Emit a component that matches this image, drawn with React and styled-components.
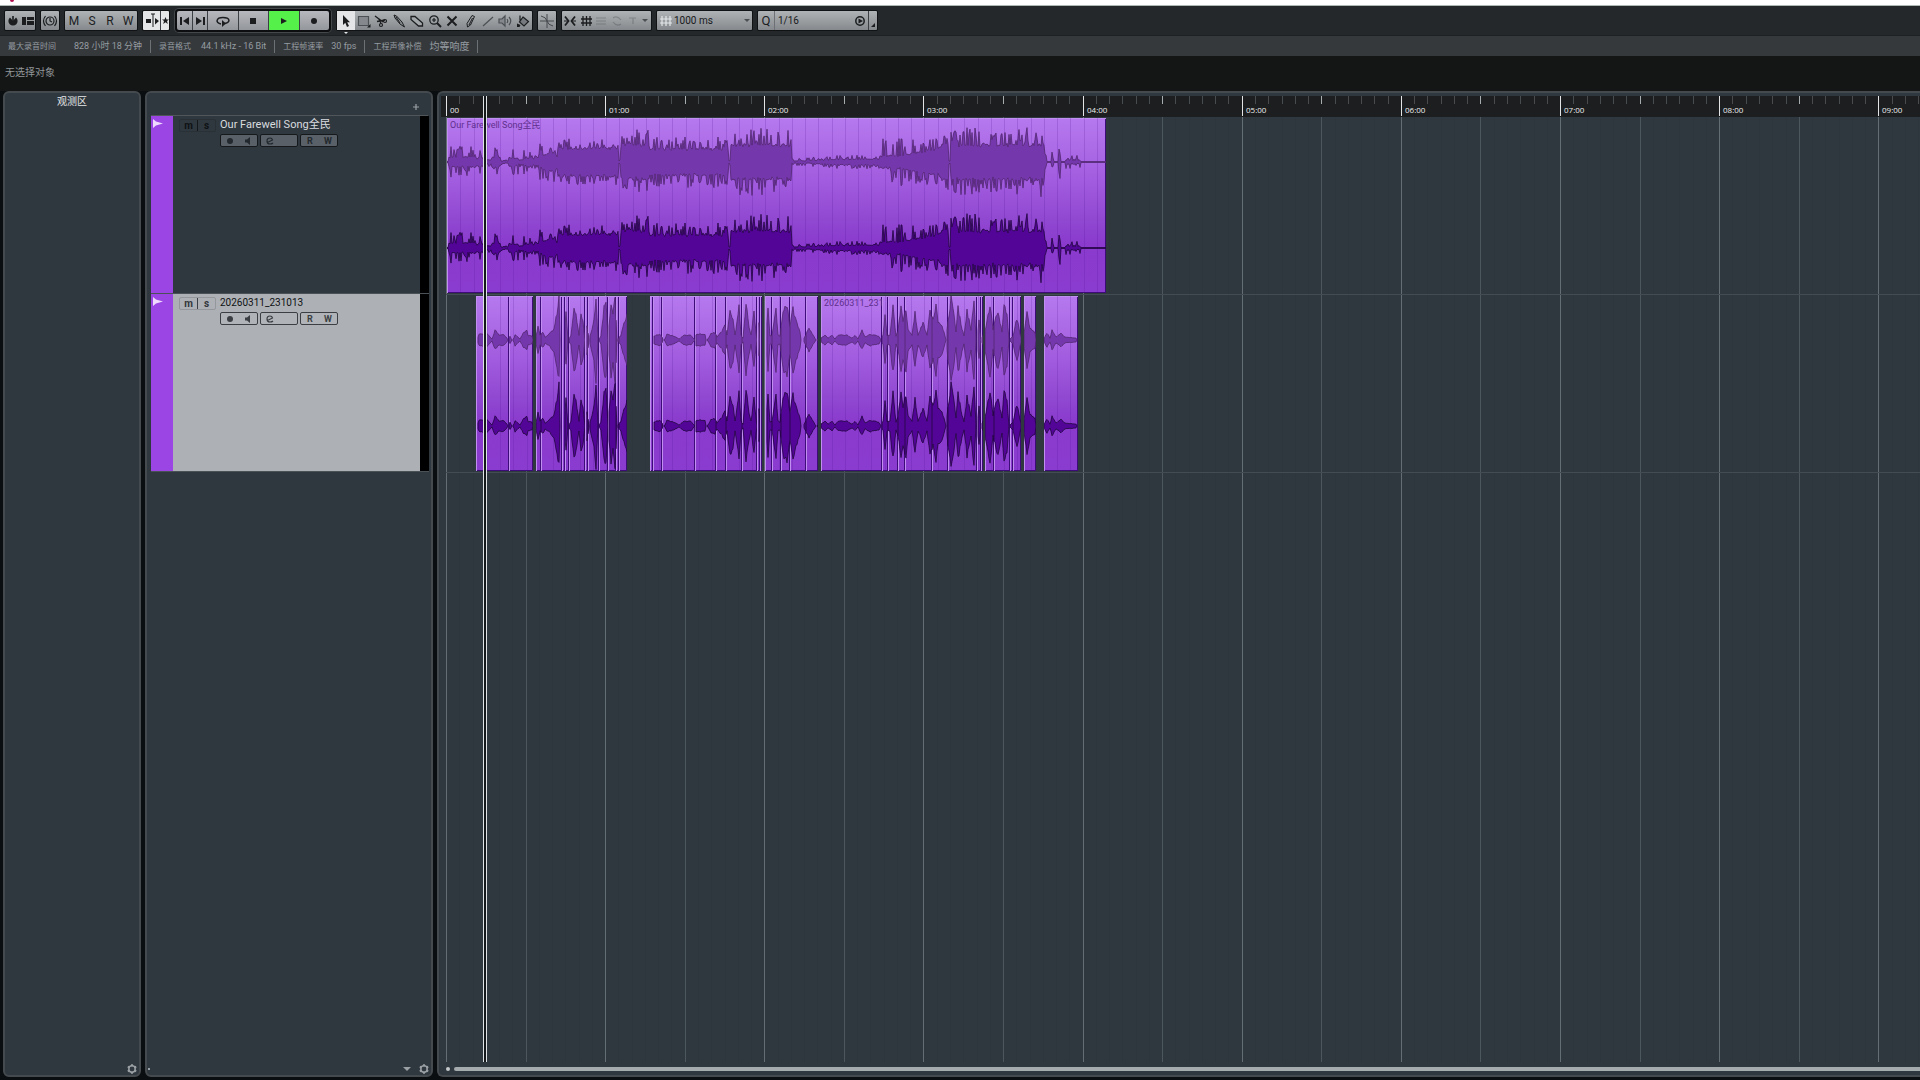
import React from "react";
import styled, { createGlobalStyle, css } from "styled-components";

const MINUTE = 159.15;
const MINUTES = 10;
const WAVE_CENTERS = [44, 130];

const at = (minutes) => Math.round(minutes * MINUTE);

// seeded noise so that every render draws the same peaks
const noise = (n) => {
  const v = Math.sin(n * 127.1 + 11.7) * 43758.5453;
  return v - Math.floor(v);
};

// [from, to, body at start, body at end, peak]
const SONG = [
  [2, 29, 4, 5, 16],
  [29, 31, 3, 3, 5],
  [31, 37, 4, 4, 14],
  [37, 45, 2, 2, 5],
  [45, 54, 5, 4, 15],
  [54, 62, 1, 1, 3],
  [62, 72, 4, 3, 14],
  [72, 77, 2, 2, 5],
  [77, 85, 3, 4, 12],
  [85, 92, 3, 3, 7],
  [92, 109, 5, 11, 21],
  [109, 111, 5, 5, 9],
  [111, 172, 14, 14, 24],
  [172, 174, 1, 1, 3],
  [174, 203, 17, 17, 33],
  [203, 282, 13, 13, 26],
  [282, 284, 1, 1, 5],
  [284, 345, 17, 17, 35],
  [345, 360, 1, 1, 4],
  [360, 380, 1, 2, 5],
  [380, 433, 2, 3, 7],
  [433, 458, 5, 6, 24],
  [458, 493, 7, 13, 24],
  [493, 502, 16, 18, 31],
  [502, 504, 1, 1, 3],
  [504, 598, 17, 17, 35],
  [598, 600, 8, 1, 8],
  [605, 607, 5, 3, 11],
  [612, 614, 12, 6, 20],
  [619, 634, 2, 1, 7],
];

// [x, amplitude], a zero closes a phrase
const VOCAL = [
  [30, 0], [32, 6], [40, 7], [45, 1], [48, 10], [52, 5], [56, 6], [60, 2], [61, 0],
  [63, 4], [65, 0], [67, 2], [68, 6], [73, 1], [76, 7], [80, 10], [81, 5], [85, 4], [86, 0],
  [89, 3], [91, 14], [93, 5], [96, 8], [98, 3], [103, 7], [107, 12], [110, 28], [112, 42], [113, 0],
  [117, 0], [119, 28], [121, 0], [124, 5], [127, 35], [130, 20], [132, 5], [134, 29], [136, 20], [138, 0],
  [139, 0], [140, 16], [142, 0], [144, 8], [147, 20], [149, 44], [151, 0], [154, 4], [157, 34], [159, 42], [161, 0],
  [162, 15], [164, 38], [166, 26], [168, 44], [170, 0], [174, 5], [176, 14], [180, 25], [181, 0],
  [206, 0], [207, 4], [213, 6], [215, 3], [216, 0], [218, 1], [220, 6], [227, 4], [232, 1], [237, 5], [244, 5], [247, 1], [248, 0],
  [249, 6], [258, 6], [259, 0], [261, 1], [264, 7], [268, 8], [270, 3], [275, 10], [278, 15], [280, 5], [283, 32],
  [286, 22], [288, 5], [292, 34], [294, 5], [296, 2], [299, 38], [302, 15], [304, 5], [307, 29], [309, 8], [310, 0],
  [311, 0], [312, 17], [313, 0], [319, 0], [321, 34], [323, 4], [325, 5], [329, 33], [331, 5], [333, 4], [336, 32], [340, 38],
  [343, 15], [346, 32], [350, 18], [353, 8], [354, 0],
  [356, 0], [362, 12], [366, 5], [369, 0],
  [374, 2], [378, 5], [381, 2], [385, 5], [388, 1], [391, 5], [400, 5], [405, 2], [408, 5], [411, 1], [415, 10], [418, 3],
  [423, 6], [432, 4], [434, 0], [436, 5], [438, 25], [440, 5], [443, 5], [446, 35], [449, 4],
  [451, 10], [454, 34], [456, 20], [459, 32], [461, 12], [465, 5], [468, 28], [471, 5], [476, 18], [480, 5], [483, 30],
  [486, 20], [489, 36], [491, 18], [495, 15], [498, 4], [499, 0],
  [501, 20], [504, 43], [507, 25], [509, 8], [511, 34], [515, 12], [517, 4], [520, 31], [524, 10], [527, 44], [529, 0],
  [530, 0], [532, 20], [534, 0], [538, 10], [543, 37], [546, 10], [549, 24], [551, 30], [555, 8], [557, 37], [560, 28], [562, 0],
  [566, 4], [570, 23], [573, 6], [575, 0], [577, 6], [580, 28], [583, 13], [588, 8], [589, 0],
  [596, 1], [600, 7], [603, 2], [605, 10], [609, 3], [614, 7], [618, 3], [629, 2], [630, 0],
];

function songLevel(x, seed) {
  const part = SONG.find(([from, to]) => x >= from && x < to);
  if (!part) return 0.5;
  const [from, to, start, end, peak] = part;
  const body = start + ((end - start) * (x - from)) / (to - from);
  const n = noise(x + seed / 4);
  const spike = n > 0.62 ? 0.2 + 0.8 * noise(x * 3.3) : n * 0.15;
  return body * (0.85 + 0.2 * noise(x + seed + 9)) + (peak - body) * spike;
}

function vocalLevel(x, seed) {
  for (let i = 1; i < VOCAL.length; i++) {
    const [x0, a0] = VOCAL[i - 1];
    const [x1, a1] = VOCAL[i];
    if (x >= x0 && x <= x1) {
      const level = a0 + ((a1 - a0) * (x - x0)) / (x1 - x0);
      return level * (0.85 + 0.2 * noise(x + seed));
    }
  }
  return 0;
}

// one closed outline for each stretch that is not silent
function wavePath(level, start, end, center) {
  const parts = [];
  let top = [];
  let bottom = [];
  const close = () => {
    if (top.length > 1) parts.push(`M${top.join("L")}L${bottom.join("L")}Z`);
    top = [];
    bottom = [];
  };
  for (let x = start; x <= end; x += 1) {
    const up = level(x, 0);
    const down = level(x, 400);
    top.push(`${x - start} ${(center - up).toFixed(1)}`);
    bottom.unshift(`${x - start} ${(center + down).toFixed(1)}`);
    if (up === 0) close();
  }
  close();
  return parts.join("");
}

const songClips = [{ start: 0, end: 659, name: "Our Farewell Song全民" }];

const vocalClips = [
  [29, 62], [62, 86], [89, 94], [94, 115], [115, 118], [118, 122], [122, 138], [138, 141],
  [141, 152], [152, 161], [161, 169], [169, 172], [172, 180], [203, 206], [206, 215],
  [215, 248], [248, 269], [269, 279], [279, 295], [295, 310], [310, 313], [313, 315],
  [318, 325], [325, 334], [334, 343], [343, 359], [359, 371], [374, 435], [435, 441],
  [441, 451], [451, 458], [458, 485], [485, 501], [501, 530], [530, 534], [534, 536],
  [538, 547], [547, 563], [563, 566], [566, 574], [577, 589], [597, 631],
].map(([start, end]) => ({
  start,
  end,
  name: start === 374 ? "20260311_231" : "",
}));

const tracks = [
  { name: "Our Farewell Song全民", selected: false, level: songLevel, clips: songClips },
  { name: "20260311_231013", selected: true, level: vocalLevel, clips: vocalClips },
];

function Icon({ w = 16, h = 16, children, ...rest }) {
  return (
    <svg
      width={w}
      height={h}
      viewBox={`0 0 ${w} ${h}`}
      fill="none"
      stroke="currentColor"
      strokeWidth="1.2"
      aria-hidden="true"
      {...rest}
    >
      {children}
    </svg>
  );
}

const tools = [
  {
    name: "选择对象",
    art: <path d="M5 2v10l2.3-2.2L9 14l2-1-1.8-3.8H12z" fill="currentColor" stroke="none" />,
  },
  {
    name: "选择范围",
    art: (
      <>
        <path d="M2.5 3.5h10v9h-10z" stroke="#4b5054" fill="#85898d" />
        <path d="M14.500 11v3.500h-3.500z" fill="currentColor" stroke="none" />
      </>
    ),
  },
  {
    name: "分割",
    art: (
      <>
        <path d="M2 3l8 6M4 8.500l8-1.500" strokeWidth="1.300" />
        <circle cx="12" cy="8" r="1.500" />
        <circle cx="8" cy="12" r="1.500" />
        <path d="M6 6l2 4.500" />
      </>
    ),
  },
  {
    name: "胶合",
    art: <path d="M3 2l2.500 1 5.500 6 2.500 5-4.500-3-5-6zM5 4l4 6" fill="#8a8e91" strokeWidth="1" />,
  },
  {
    name: "擦除",
    art: <path d="M2 3.500h4l7.500 6.500v3h-4L2 6.500z" fill="#a3a7aa" strokeWidth="1.300" />,
  },
  {
    name: "缩放",
    art: (
      <>
        <circle cx="7" cy="7" r="4.200" strokeWidth="1.300" />
        <path d="M5 7h4M7 5v4" />
        <path d="M10 10l4 4" strokeWidth="2" />
      </>
    ),
  },
  { name: "静音", art: <path d="M3.500 3.500l9 9M12.500 3.500l-9 9" strokeWidth="2" /> },
  { name: "绘制", art: <path d="M10 2.500l2.500 1-4 8.500L5.500 14l-.5-3.500zM10.500 5L7 12" strokeWidth="1" /> },
  { name: "直线", art: <path d="M3 13L13 4" stroke="#4b5054" /> },
  {
    name: "播放",
    art: (
      <>
        <path d="M2 6h3l3-3v10l-3-3H2z" stroke="#4b5054" fill="#85898d" />
        <path d="M10 6q1.500 2 0 4M12 4q3.500 4 0 8" stroke="#4b5054" />
      </>
    ),
  },
  {
    name: "颜色",
    art: (
      <>
        <path d="M8 4l5.500 4.500L9 13 4.500 9zM5 2.500v5" fill="#777b7f" strokeWidth="1.200" />
        <path d="M2 10.500l3.500 1.500-1 2H2z" fill="currentColor" stroke="none" />
      </>
    ),
  },
];

const GearIcon = () => (
  <Icon w={12} h={12} strokeWidth="1.500">
    <path d="M6 1.200v2M6 8.800v2M1.800 3.600l1.800 1M8.400 7.400l1.800 1M1.800 8.400l1.800-1M8.400 4.600l1.800-1" strokeWidth="2" />
    <circle cx="6" cy="6" r="3.200" />
  </Icon>
);

function Toolbar() {
  return (
    <ToolbarBar>
      <Group $width={30}>
        <ToolButton aria-label="激活工程">
          <Icon w={12} h={12}>
            <path d="M3 2.500a4.600 4.600 0 1 0 6 0L6 6z" fill="currentColor" stroke="none" />
            <path d="M6 1v5" strokeWidth="1.600" />
          </Icon>
        </ToolButton>
        <ToolButton aria-label="设置窗口布局">
          <Icon w={12} h={10} fill="currentColor" stroke="none">
            <path d="M0 1h4v8H0zM5 1h7v3H5zM5 5h7v4H5z" />
          </Icon>
        </ToolButton>
      </Group>
      <Group $width={18}>
        <ToolButton aria-label="约束延迟补偿">
          <Icon>
            <circle cx="8" cy="8" r="4" />
            <path d="M8 5v3l2 1" />
            <path d="M3.500 3q-4 5 0 10M12.500 3q4 5 0 10" />
          </Icon>
        </ToolButton>
      </Group>
      <Group $width={72}>
        {["M", "S", "R", "W"].map((letter) => (
          <ToolButton key={letter}>{letter}</ToolButton>
        ))}
      </Group>
      <Group $width={26} $bright>
        <ToolButton aria-label="自动滚动">
          <Icon>
            <path d="M7 1h4M9 1v13" strokeWidth="1" />
            <path d="M2 6h5v4H2zM11 5l4 3-4 3.500z" fill="currentColor" stroke="none" />
          </Icon>
        </ToolButton>
        <ToolButton $divided $width={9} aria-label="停止自动滚动">
          <Icon w={7} h={7} fill="currentColor" stroke="none">
            <path d="M3.500 0l1 2.400H7L5 4l.8 3-2.300-1.800L1.200 7 2 4 0 2.400h2.500z" />
          </Icon>
        </ToolButton>
      </Group>
      <Transport>
        <ToolButton $width={15} aria-label="前往上一标记">
          <Icon w={12} h={12} fill="currentColor">
            <path d="M2 2v8" strokeWidth="2" />
            <path d="M10 2v8L4 6z" stroke="none" />
          </Icon>
        </ToolButton>
        <ToolButton $width={15} $divided aria-label="前往下一标记">
          <Icon w={12} h={12} fill="currentColor">
            <path d="M10 2v8" strokeWidth="2" />
            <path d="M2 2v8l6-4z" stroke="none" />
          </Icon>
        </ToolButton>
        <ToolButton $divided aria-label="循环">
          <Icon>
            <path d="M6 11C0 10 1 4.500 8 4.500s8 4.500 2 6" strokeWidth="1.500" />
            <path d="M7 7v7l4-3.500z" fill="currentColor" stroke="none" />
          </Icon>
        </ToolButton>
        <ToolButton $divided aria-label="停止">
          <Icon w={8} h={8} stroke="none" fill="currentColor">
            <path d="M1 1h6v6H1z" />
          </Icon>
        </ToolButton>
        <ToolButton $divided $playing aria-label="开始">
          <Icon w={8} h={8} stroke="none" fill="currentColor">
            <path d="M1 1l6 3-6 3z" />
          </Icon>
        </ToolButton>
        <ToolButton $divided aria-label="录音">
          <Icon w={8} h={8} stroke="none" fill="currentColor">
            <circle cx="4" cy="4" r="3" />
          </Icon>
        </ToolButton>
      </Transport>
      <Group $width={195}>
        {tools.map((tool, i) => (
          <ToolButton key={tool.name} $active={i === 0} aria-label={tool.name}>
            <Icon>{tool.art}</Icon>
            {i === 0 && <ToolMark />}
          </ToolButton>
        ))}
      </Group>
      <Group $width={18}>
        <ToolButton aria-label="吸附到过零点">
          <Icon>
            <path d="M1 8h14M8 1v14M2 3q5 1 6 5t6 5" stroke="#45494d" strokeWidth="1" />
          </Icon>
        </ToolButton>
      </Group>
      <Group $width={89}>
        <ToolButton aria-label="吸附">
          <Icon>
            <path d="M3 3.500L6.500 8 3 12.500M13 3.500L9.500 8l3.500 4.500" strokeWidth="1.800" />
            <path d="M2 8h4M10 8h4" />
          </Icon>
        </ToolButton>
        <ToolButton aria-label="吸附类型">
          <Icon>
            <path d="M3 6h11M3 10h11M5 3v10M8.500 3v10M12 3v10" strokeWidth="1.300" />
          </Icon>
        </ToolButton>
        <ToolButton disabled aria-label="网格">
          <Icon w={12}>
            <path d="M1 5h10M1 8h10M1 11h10" />
          </Icon>
        </ToolButton>
        <ToolButton disabled aria-label="事件">
          <Icon w={12}>
            <path d="M2 5q4-3 8 2M10 11q-4 3-8-2" />
          </Icon>
        </ToolButton>
        <ToolButton disabled aria-label="光标">
          <Icon w={12}>
            <path d="M2 5h7M6 5v6" />
          </Icon>
        </ToolButton>
        <ToolButton $width={10} aria-label="更多吸附类型">
          <Caret />
        </ToolButton>
      </Group>
      <Group $width={95}>
        <GridMark w={12} h={12} stroke="#e4e6e8">
          <path d="M0 4h12M0 8h12M2 1v10M6 1v10M10 1v10" />
        </GridMark>
        <Choice aria-label="网格类型" defaultValue="1000 ms">
          <option>1000 ms</option>
        </Choice>
        <Caret />
      </Group>
      <Group $width={119}>
        <QuantizeButton aria-label="应用量化">Q</QuantizeButton>
        <Choice aria-label="量化预置" defaultValue="1/16">
          <option>1/16</option>
        </Choice>
        <ToolButton $width={17} aria-label="打开量化面板">
          <Icon w={12} h={12}>
            <circle cx="6" cy="6" r="4.200" strokeWidth="1.500" />
            <path d="M4.500 3.500v5L9 6z" fill="currentColor" stroke="none" />
          </Icon>
        </ToolButton>
        <ToolButton $divided $width={9} aria-label="更多">
          <Icon w={6} h={16}>
            <path d="M5 10v4H1z" fill="currentColor" stroke="none" />
          </Icon>
        </ToolButton>
      </Group>
    </ToolbarBar>
  );
}

function InfoLine() {
  return (
    <InfoBar>
      <InfoItem>
        <InfoLabel>最大录音时间</InfoLabel>
        <InfoValue $gap={18}>828 小时 18 分钟</InfoValue>
      </InfoItem>
      <InfoItem>
        <InfoLabel>录音格式</InfoLabel>
        <InfoValue>44.1 kHz - 16 Bit</InfoValue>
      </InfoItem>
      <InfoItem>
        <InfoLabel>工程帧速率</InfoLabel>
        <InfoValue $gap={8}>30 fps</InfoValue>
      </InfoItem>
      <InfoItem>
        <InfoLabel>工程声像补偿</InfoLabel>
        <InfoValue $gap={8} $size={10}>
          均等响度
        </InfoValue>
      </InfoItem>
    </InfoBar>
  );
}

function Track({ name, selected }) {
  return (
    <TrackRow $selected={selected}>
      <TrackColor>
        <Icon w={10} h={10} fill="#f0d9ff" stroke="none">
          <path d="M0 0l3 2.500 7 2-7 2L0 9z" />
        </Icon>
      </TrackColor>
      <TrackBody>
        <MuteSolo $selected={selected}>
          <button aria-label={`${name} 静音`}>m</button>
          <button aria-label={`${name} 独奏`}>s</button>
        </MuteSolo>
        <TrackMain>
          <TrackName $selected={selected}>{name}</TrackName>
          <TrackControls>
            <ControlPair $selected={selected}>
              <button aria-label="录音启用">
                <Icon w={8} h={8} fill="currentColor" stroke="none">
                  <circle cx="4" cy="4" r="3" />
                </Icon>
              </button>
              <button aria-label="监听">
                <Icon w={8} h={8} fill="currentColor" stroke="none">
                  <path d="M6 0v8L3 5.500H1v-3h2z" />
                </Icon>
              </button>
            </ControlPair>
            <ControlPair $selected={selected}>
              <button aria-label="编辑通道设置">
                <Icon w={8} h={8}>
                  <path d="M1.500 5.500L6.500 3Q6 1 4 1 1 1 1 4t3 3q2 0 3-1" />
                </Icon>
              </button>
              <span />
            </ControlPair>
            <ControlPair $selected={selected}>
              <button>R</button>
              <button>W</button>
            </ControlPair>
          </TrackControls>
        </TrackMain>
      </TrackBody>
      <Meter />
    </TrackRow>
  );
}

const gridTicks = Array.from({ length: MINUTES * 12 }, (_, i) => ({
  x: at(i / 12),
  kind: i % 12 === 0 ? "minute" : i % 6 === 0 ? "half" : "minor",
}));

const gridColors = { minute: "#626d74", half: "#4b565d", minor: "#2d363d" };

function Clip({ clip, offset, level }) {
  const width = clip.end - clip.start;
  return (
    <ClipBox style={{ width, marginLeft: offset }}>
      <ClipArt width={width} height="174" aria-hidden="true">
        {gridTicks
          .filter((t) => t.x > clip.start && t.x < clip.end)
          .map((t) => (
            <path key={t.x} d={`M${t.x - clip.start + 0.5} 0v174`} stroke="#4a1090" opacity="0.18" />
          ))}
        <path
          d={wavePath(level, clip.start, clip.end, WAVE_CENTERS[0])}
          fill="#7538ac"
          stroke="#50276f"
          strokeWidth="0.800"
        />
        <path
          d={wavePath(level, clip.start, clip.end, WAVE_CENTERS[1])}
          fill="#520596"
          stroke="#22063f"
          strokeWidth="0.800"
        />
      </ClipArt>
      {clip.name && <ClipName>{clip.name}</ClipName>}
    </ClipBox>
  );
}

function Ruler() {
  return (
    <RulerBar>
      {Array.from({ length: MINUTES }, (_, m) => (
        <RulerCell key={m} style={{ width: at(m + 1) - at(m) }}>
          <RulerTicks width="158" height="8" aria-hidden="true">
            {Array.from({ length: 11 }, (_, i) => (
              <path
                key={i}
                d={`M${at(m + (i + 1) / 12) - at(m) - 0.5} 0v8`}
                stroke={i === 5 ? "#a8adb0" : "#484c4e"}
              />
            ))}
          </RulerTicks>
          <RulerLabel>{m === 0 ? "00" : `${String(m).padStart(2, "0")}:00`}</RulerLabel>
        </RulerCell>
      ))}
    </RulerBar>
  );
}

function Timeline() {
  return (
    <TimelinePanel>
      <Ruler />
      <Canvas>
        <Grid width={MINUTES * 160} height="100%" aria-hidden="true">
          {gridTicks.map((t) => (
            <rect key={t.x} x={t.x} width="1" height="100%" fill={gridColors[t.kind]} />
          ))}
        </Grid>
        {tracks.map((track) => (
          <Lane key={track.name}>
            {track.clips.map((clip, i) => (
              <Clip
                key={clip.start}
                clip={clip}
                level={track.level}
                offset={clip.start - (i ? track.clips[i - 1].end : 0)}
              />
            ))}
          </Lane>
        ))}
      </Canvas>
      <Playhead />
      <ScrollTrack>
        <ScrollDot />
        <ScrollThumb />
      </ScrollTrack>
    </TimelinePanel>
  );
}

function App() {
  return (
    <Page>
      <GlobalStyle />
      <TitleStrip>
        <TitleMark />
      </TitleStrip>
      <Toolbar />
      <InfoLine />
      <SelectionLine>无选择对象</SelectionLine>
      <Workspace>
        <VisibilityPanel>
          <PanelTitle>观测区</PanelTitle>
          <PanelFooter>
            <FooterButton aria-label="观测区设置">
              <GearIcon />
            </FooterButton>
          </PanelFooter>
        </VisibilityPanel>
        <TrackPanel>
          <TrackHeader>
            <FooterButton aria-label="添加轨道">
              <Icon w={8} h={8}>
                <path d="M4 1v6M1 4h6" />
              </Icon>
            </FooterButton>
          </TrackHeader>
          {tracks.map((track) => (
            <Track key={track.name} {...track} />
          ))}
          <PanelFooter>
            <FooterDot />
            <FooterButton aria-label="轨道列表菜单">
              <Caret $light />
            </FooterButton>
            <FooterButton aria-label="轨道控制设置">
              <GearIcon />
            </FooterButton>
          </PanelFooter>
        </TrackPanel>
        <Timeline />
      </Workspace>
    </Page>
  );
}

export default App;

const GlobalStyle = createGlobalStyle`
  * {
    box-sizing: border-box;
  }
  body {
    margin: 0;
    background: #0b0e10;
    font-family: Roboto, "Noto Sans CJK SC", sans-serif;
    font-size: 11px;
  }
  button {
    display: flex;
    align-items: center;
    justify-content: center;
    padding: 0;
    border: none;
    background: none;
    color: inherit;
    font: inherit;
  }
  svg {
    flex: none;
  }
`;

const Page = styled.div`
  display: flex;
  flex-direction: column;
  height: 100vh;
  overflow: hidden;
`;

const TitleStrip = styled.div`
  flex: none;
  height: 6px;
  padding-left: 10px;
  background: #ffffff;
  border-bottom: 1px solid #b0b8b4;
`;

const TitleMark = styled.div`
  width: 4px;
  height: 2px;
  border-radius: 0 0 2px 2px;
  background: #b0104c;
`;

const ToolbarBar = styled.div`
  display: flex;
  flex: none;
  align-items: center;
  gap: 6px;
  height: 30px;
  padding: 0 5px;
  background: #25282b;
  border-bottom: 1px solid #1e2124;
`;

const Group = styled.div`
  display: flex;
  align-items: center;
  flex: none;
  width: ${(p) => p.$width}px;
  height: 19px;
  border-radius: 1px;
  box-shadow: 0 0 0 1px #101214;
  background: ${(p) =>
    p.$bright ? "#e4e6e7" : "linear-gradient(#b0b3b5, #85898d)"};
  color: #1b1d1f;
`;

const Transport = styled(Group)`
  width: 156px;
  height: 23px;
  border: 2px solid #0c0e10;
  border-radius: 4px;
  box-shadow: 0 0 0 1px #44484b;
  background: linear-gradient(#b6b8be, #94979c);
`;

const ToolButton = styled.button`
  position: relative;
  flex: ${(p) => (p.$width ? `0 0 ${p.$width}px` : "1 1 0")};
  min-width: 0;
  height: 100%;
  font-size: 12px;
  overflow: visible;
  ${(p) =>
    p.$divided &&
    css`
      border-left: 1px solid #3c3f43;
    `}
  ${(p) =>
    p.$playing &&
    css`
      background: #55f04a;
    `}
  ${(p) =>
    p.$active &&
    css`
      background: #e4e5e7;
    `}
  &:disabled {
    opacity: 0.22;
  }
`;

const ToolMark = styled.span`
  position: absolute;
  top: 21px;
  border: 2px solid transparent;
  border-top-color: #e4e5e7;
`;

const Caret = styled.span`
  flex: none;
  border: ${(p) => (p.$light ? 4 : 3)}px solid transparent;
  border-bottom: none;
  border-top-color: ${(p) => (p.$light ? "#9aa0a4" : "#4b4f53")};
  margin-right: 2px;
`;

const GridMark = styled(Icon)`
  margin: 0 2px 0 3px;
`;

const Choice = styled.select`
  flex: 1;
  min-width: 0;
  height: 100%;
  appearance: none;
  border: none;
  background: none;
  color: #17191b;
  font: inherit;
  font-size: 10px;
  padding: 0;
`;

const QuantizeButton = styled.button`
  flex: none;
  width: 17px;
  height: 100%;
  margin-right: 3px;
  border-right: 1px solid #6d7175;
  font-size: 13px;
`;

const InfoBar = styled.div`
  display: flex;
  flex: none;
  align-items: center;
  height: 20px;
  background: #35393c;
  color: #969ca1;
`;

const InfoItem = styled.div`
  display: flex;
  align-items: center;
  height: 13px;
  padding: 0 8px;
  border-right: 1px solid #6b7175;
  line-height: 13px;
  white-space: nowrap;
`;

const InfoLabel = styled.span`
  font-size: 8px;
`;

const InfoValue = styled.span`
  margin-left: ${(p) => p.$gap || 10}px;
  font-size: ${(p) => p.$size || 9}px;
`;

const SelectionLine = styled.div`
  flex: none;
  height: 35px;
  padding-left: 5px;
  background: #141615;
  color: #92969a;
  font-size: 10px;
  line-height: 33px;
`;

const Workspace = styled.div`
  display: flex;
  flex: 1;
  gap: 4px;
  min-height: 0;
  padding: 0 0 3px 3px;
`;

const Panel = styled.section`
  display: flex;
  flex-direction: column;
  min-height: 0;
  border: 2px solid #444a4e;
  border-radius: 6px;
  background: #30383f;
`;

const VisibilityPanel = styled(Panel)`
  flex: 0 0 138px;
`;

const PanelTitle = styled.h2`
  margin: 0;
  color: #e6e8ea;
  font-size: 10px;
  font-weight: 400;
  line-height: 18px;
  text-align: center;
`;

const PanelFooter = styled.div`
  display: flex;
  align-items: center;
  justify-content: flex-end;
  gap: 5px;
  height: 12px;
  margin-top: auto;
  padding: 0 1px;
`;

const FooterButton = styled.button`
  color: #9aa0a4;
`;

const FooterDot = styled.span`
  width: 2px;
  height: 2px;
  margin-right: auto;
  background: #9aa0a4;
`;

const TrackPanel = styled(Panel)`
  flex: 0 0 288px;
`;

const TrackHeader = styled.div`
  display: flex;
  flex: none;
  align-items: flex-end;
  justify-content: flex-end;
  height: 23px;
  margin: 0 3px 0 4px;
  padding: 0 8px 4px;
  border-bottom: 1px solid #50565a;
`;

const TrackRow = styled.div`
  display: flex;
  flex: none;
  height: 178px;
  margin: 0 2px 0 4px;
  border-bottom: 1px solid #4b5257;
  background: ${(p) => (p.$selected ? "#adb1b6" : "#30383f")};
  color: ${(p) => (p.$selected ? "#0f1113" : "#d9dcdf")};
`;

const TrackColor = styled.div`
  flex: 0 0 22px;
  padding: 3px 2px;
  background: #9a45e4;
`;

const TrackBody = styled.div`
  display: flex;
  flex: 1;
  gap: 4px;
  padding: 2px 6px;
`;

const Meter = styled.div`
  flex: 0 0 9px;
  background: #000000;
`;

const MuteSolo = styled.div`
  display: flex;
  flex: 0 0 37px;
  height: 13px;
  margin-top: 1px;
  border: 1px solid ${(p) => (p.$selected ? "#94989c" : "#293036")};
  border-radius: 2px;
  color: ${(p) => (p.$selected ? "#33373b" : "#0e1215")};

  button {
    flex: 1;
    font-size: 10px;
    font-weight: 700;
    line-height: 10px;
  }
  button + button {
    border-left: 1px solid ${(p) => (p.$selected ? "#3c4044" : "#14181b")};
  }
`;

const TrackMain = styled.div`
  display: flex;
  flex-direction: column;
  gap: 2px;
`;

const TrackName = styled.span`
  height: 14px;
  font-size: ${(p) => (p.$selected ? 10 : 11)}px;
  line-height: 14px;
  white-space: nowrap;
`;

const TrackControls = styled.div`
  display: flex;
  gap: 2px;
`;

const ControlPair = styled.div`
  display: flex;
  width: 38px;
  height: 13px;
  border: 1px solid ${(p) => (p.$selected ? "#3b3f43" : "#15191c")};
  border-radius: 2px;
  background: ${(p) => (p.$selected ? "#b0b4b9" : "#596068")};
  color: ${(p) => (p.$selected ? "#3b3f43" : "#22282d")};

  > * {
    flex: 1;
    font-size: 9px;
    font-weight: 700;
  }
`;

const TimelinePanel = styled(Panel)`
  position: relative;
  flex: 1;
  min-width: 0;
  overflow: hidden;
  border-right: none;
  border-radius: 6px 0 0 6px;
  padding: 3px 0 0 2px;
`;

const RulerBar = styled.div`
  display: flex;
  flex: none;
  height: 21px;
  padding-left: 5px;
  overflow: hidden;
  background: #1c1e1f;
`;

const RulerCell = styled.div`
  flex: none;
  height: 20px;
  border-left: 1px solid #e2e4e5;
`;

const RulerTicks = styled.svg`
  display: block;
`;

const RulerLabel = styled.span`
  display: block;
  padding-left: 3px;
  color: #eceeef;
  font-family: "Open Sans", sans-serif;
  font-size: 8px;
  line-height: 11px;
`;

const Canvas = styled.div`
  position: relative;
  flex: 1;
  min-height: 0;
  margin-left: 5px;
  overflow: hidden;
`;

const Grid = styled.svg`
  position: absolute;
  top: 0;
  left: 0;
`;

const Lane = styled.div`
  position: relative;
  display: flex;
  height: 178px;
  padding: 1px 0 1px 1px;
  border-bottom: 1px solid #424c52;
`;

const ClipBox = styled.div`
  position: relative;
  flex: none;
  height: 175px;
  overflow: hidden;
  background: linear-gradient(#b679ee, #a05ade 38%, #924bd2 55%, #8a3bcd 72%, #8b3cd0);
  box-shadow: inset 1px 1px 0 #c08ff0, inset -1px -1px 0 #3d0c78;
`;

const ClipArt = styled.svg`
  display: block;
`;

const ClipName = styled.span`
  position: absolute;
  top: 1px;
  left: 3px;
  color: #5f2f8c;
  font-size: 9px;
  line-height: 13px;
  white-space: nowrap;
`;

const Playhead = styled.div`
  position: absolute;
  top: 3px;
  bottom: 13px;
  left: 44px;
  width: 4px;
  border: solid #dfe3e5;
  border-width: 0 1px;
  background: #14181b;
`;

const ScrollTrack = styled.div`
  display: flex;
  flex: none;
  align-items: center;
  height: 13px;
  padding-left: 5px;
`;

const ScrollDot = styled.span`
  width: 4px;
  height: 4px;
  margin-right: 4px;
  border-radius: 2px;
  background: #c6cacd;
`;

const ScrollThumb = styled.div`
  flex: 1;
  height: 4px;
  border-radius: 2px 0 0 2px;
  background: #a6abae;
`;
